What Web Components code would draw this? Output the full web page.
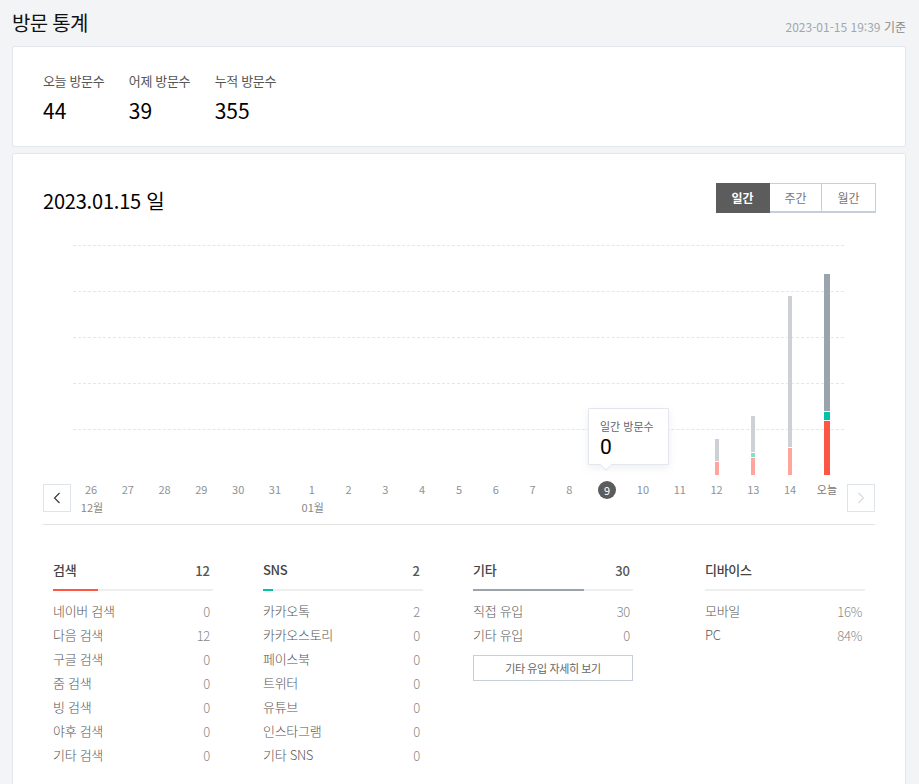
<!DOCTYPE html>
<html lang="ko">
<head>
<meta charset="utf-8">
<title>방문 통계</title>
<style>
  html, body { margin: 0; padding: 0; background: #f3f4f6; }
  body { font-family: "Noto Sans CJK KR", "Noto Sans", sans-serif; color: #000; height: 784px; overflow: hidden; }
  visit-page { width: 919px; }
</style>
</head>
<body>
<visit-page></visit-page>
<script>
class VisitHeader extends HTMLElement {
  constructor() {
    super();
    this.attachShadow({ mode: 'open' });
    this.shadowRoot.innerHTML = `
      <style>
        :host { display: flex; justify-content: space-between; align-items: flex-end; height: 46px; padding: 0 13px 0 12px; }
        h1 { margin: 0 0 11px; font-size: 20px; font-weight: 400; line-height: 24px; letter-spacing: -0.7px; color: #111; }
        span { margin-bottom: 11px; font-size: 12px; line-height: 16px; color: #a0a7ae; }
        b { font-weight: 400; color: #8a8a8a; }
      </style>
      <h1><slot name="title"></slot></h1>
      <span><slot name="time"></slot> <b>기준</b></span>
    `;
  }
}

class SummaryCard extends HTMLElement {
  constructor() {
    super();
    this.attachShadow({ mode: 'open' });
    this.shadowRoot.innerHTML = `
      <style>
        :host { display: block; box-sizing: border-box; height: 101px; margin: 0 13px 6px 12px; padding: 25px 30px 0; background: #fff; border: 1px solid #e3e6ec; border-radius: 2px; }
        #items { display: flex; gap: 24.5px; }
        .item { display: flex; flex-direction: column; }
        span { font-size: 13px; line-height: 18px; letter-spacing: -0.35px; color: #555; }
        strong { margin-top: 7px; font-size: 21px; line-height: 26px; font-weight: 400; color: #000; }
      </style>
      <div id="items"></div>
    `;
  }

  set data(items) {
    const box = this.shadowRoot.getElementById('items');
    box.innerHTML = items.map((i) => `<div class="item"><span>${i.label}</span><strong>${i.value}</strong></div>`).join('');
  }
}

class PeriodTabs extends HTMLElement {
  constructor() {
    super();
    this.attachShadow({ mode: 'open' });
    this.shadowRoot.innerHTML = `
      <style>
        :host { display: flex; height: 30px; }
        button { box-sizing: border-box; width: 52px; height: 30px; margin: 0; padding: 0; background: #fff; border: 1px solid #c5ced9; border-left: 0; border-bottom-width: 2px; font: inherit; font-size: 12px; color: #777; }
        button:last-child { width: 54px; }
        button.on { width: 54px; background: #5c5c5c; border-color: #5c5c5c; color: #fff; font-weight: 700; }
      </style>
      <button class="on">일간</button><button>주간</button><button>월간</button>
    `;
  }
}

class VisitChart extends HTMLElement {
  constructor() {
    super();
    this.attachShadow({ mode: 'open' });
    this.shadowRoot.innerHTML = `
      <style>
        :host { display: block; position: relative; }
        .plot { position: relative; height: 230px; margin: 0 31px 0 29.6px; }
        .line { position: absolute; left: 0; right: 0; border-top: 1px dashed #e4e6e8; }
        .cols, .dates { display: grid; grid-template-columns: repeat(21, 36.8px); }
        .cols { position: relative; height: 100%; align-items: end; justify-items: center; }
        .bar { display: flex; flex-direction: column; gap: 1px; width: 4px; }
        .bar.today { width: 6px; }
        .bar i { display: block; }
        .foot { display: flex; align-items: flex-start; height: 50px; padding-top: 9px; box-sizing: border-box; border-bottom: 1px solid #e3e3e3; }
        .nav { flex: none; box-sizing: border-box; width: 28px; height: 28px; background: #fff; border: 1px solid #dfe3ea; display: flex; align-items: center; justify-content: center; }
        .dates { flex: 1; padding-left: 1.6px; margin-top: -2px; }
        .date { position: relative; text-align: center; font-size: 11px; line-height: 14px; color: #8d9297; height: 14px; }
        .date small { position: absolute; left: 1px; right: -1px; top: 18px; font-size: 11px; line-height: 14px; color: #888; white-space: nowrap; }
        .date.sel span { display: inline-block; width: 18px; height: 18px; margin: -1px 0 0 2px; border-radius: 50%; background: #5c5c5c; color: #fff; line-height: 18px; }
        .date.now { color: #777; }
        .tip { position: absolute; left: 545px; top: 163px; box-sizing: border-box; width: 81px; height: 57px; padding: 9px 11px 0; background: #fff; border: 1px solid #e3e6ee; box-shadow: 0 3px 8px rgba(90, 100, 120, .1); border-radius: 1px; }
        .tip span { display: block; font-size: 11px; line-height: 16px; color: #666; white-space: nowrap; }
        .tip strong { display: block; margin-top: 1px; font-family: Roboto, sans-serif; font-size: 21px; line-height: 25px; font-weight: 400; color: #000; }
        .tip::after { content: ""; position: absolute; left: 12px; bottom: -6px; width: 9px; height: 9px; background: #fff; border-right: 1px solid #e3e6ee; border-bottom: 1px solid #e3e6ee; transform: rotate(45deg) scale(.8); }
      </style>
      <div class="plot">
        <div id="lines"></div>
        <div class="cols" id="cols"></div>
      </div>
      <div class="foot">
        <div class="nav"><svg width="8" height="12" viewBox="0 0 8 12"><path d="M6.500 1 1.500 6l5 5" fill="none" stroke="#333" stroke-width="1.100"/></svg></div>
        <div class="dates" id="dates"></div>
        <div class="nav"><svg width="8" height="12" viewBox="0 0 8 12"><path d="M1.500 1l5 5-5 5" fill="none" stroke="#d5d9e0" stroke-width="1.100"/></svg></div>
      </div>
      <div class="tip"><span>일간 방문수</span><strong>0</strong></div>
    `;
  }

  set data(days) {
    const root = this.shadowRoot;
    root.getElementById('lines').innerHTML = [0, 46, 92, 138, 184]
      .map((y) => `<div class="line" style="top:${y}px"></div>`).join('');
    root.getElementById('cols').innerHTML = days.map((d) => {
      const parts = (d.bars || []).map((b) => `<i style="height:${b[0]}px;background:${b[1]}"></i>`).join('');
      return `<div class="bar ${d.label === '오늘' ? 'today' : ''}">${parts}</div>`;
    }).join('');
    root.getElementById('dates').innerHTML = days.map((d) => {
      const cls = d.selected ? 'sel' : d.label === '오늘' ? 'now' : '';
      const month = d.month ? `<small>${d.month}</small>` : '';
      return `<div class="date ${cls}"><span>${d.label}</span>${month}</div>`;
    }).join('');
  }
}

class StatList extends HTMLElement {
  constructor() {
    super();
    this.attachShadow({ mode: 'open' });
    this.shadowRoot.innerHTML = `
      <style>
        :host { display: block; width: 160px; }
        .head { display: flex; justify-content: space-between; align-items: center; height: 24px; padding-right: 3px; font-size: 13px; font-weight: 500; letter-spacing: -0.3px; color: #444; }
        .head b { font-weight: 500; color: #555; padding-top: 2px; letter-spacing: 0; }
        .track { height: 2px; margin: 8px 0 7px; background: #eee; }
        .track i { display: block; height: 100%; }
        .row { display: flex; justify-content: space-between; align-items: center; height: 24px; padding-right: 3px; font-size: 13px; font-weight: 300; letter-spacing: -0.3px; color: #555; }
        .row b { font-weight: 300; color: #888; padding-top: 2px; }
        ::slotted(*) { margin-top: 9px; }
      </style>
      <div class="head"><span id="title"></span><b id="total"></b></div>
      <div class="track"><i id="fill"></i></div>
      <div id="rows"></div>
      <slot></slot>
    `;
  }

  set data(d) {
    const root = this.shadowRoot;
    root.getElementById('title').textContent = d.title;
    root.getElementById('total').textContent = d.total || '';
    const fill = root.getElementById('fill');
    fill.style.width = (d.fill || 0) + 'px';
    fill.style.background = d.color || 'transparent';
    root.getElementById('rows').innerHTML = d.rows
      .map((r) => `<div class="row"><span>${r[0]}</span><b>${r[1]}</b></div>`).join('');
  }
}

class OutlineButton extends HTMLElement {
  constructor() {
    super();
    this.attachShadow({ mode: 'open' });
    this.shadowRoot.innerHTML = `
      <style>
        :host { display: flex; align-items: center; justify-content: center; box-sizing: border-box; height: 26px; border: 1px solid #c5ced9; font-size: 11px; letter-spacing: -0.4px; color: #666; background: #fff; }
      </style>
      <slot></slot>
    `;
  }
}

class VisitPage extends HTMLElement {
  constructor() {
    super();
    this.attachShadow({ mode: 'open' });
    this.shadowRoot.innerHTML = `
      <style>
        :host { display: block; }
        .card { box-sizing: border-box; height: 640px; margin: 0 13px 0 12px; padding: 29px 30px 0; background: #fff; border: 1px solid #e3e6ec; border-radius: 2px; }
        .top { display: flex; justify-content: space-between; align-items: flex-start; height: 62px; }
        h2 { margin: 0; padding-top: 3px; font-size: 20px; line-height: 30px; font-weight: 400; letter-spacing: -0.2px; color: #000; }
        period-tabs { margin-right: -1px; }
        .stats { display: flex; padding: 32px 10px 0; }
        .stats stat-list + stat-list { margin-left: 50px; }
        .stats stat-list:last-child { margin-left: 72px; }
      </style>
      <visit-header><span slot="title">방문 통계</span><span slot="time">2023-01-15 19:39</span></visit-header>
      <summary-card id="summary"></summary-card>
      <div class="card">
        <div class="top"><h2>2023.01.15 일</h2><period-tabs></period-tabs></div>
        <visit-chart id="chart"></visit-chart>
        <div class="stats">
          <stat-list id="search"></stat-list>
          <stat-list id="sns"></stat-list>
          <stat-list id="etc"><outline-button>기타 유입 자세히 보기</outline-button></stat-list>
          <stat-list id="device"></stat-list>
        </div>
      </div>
    `;
  }

  connectedCallback() {
    const root = this.shadowRoot;
    root.getElementById('summary').data = [
      { label: '오늘 방문수', value: 44 },
      { label: '어제 방문수', value: 39 },
      { label: '누적 방문수', value: 355 },
    ];

    const labels = ['26', '27', '28', '29', '30', '31', '1', '2', '3', '4', '5', '6', '7', '8', '9', '10', '11', '12', '13', '14', '오늘'];
    const days = labels.map((label) => ({ label }));
    days[0].month = '12월';
    days[6].month = '01월';
    days[14].selected = true;
    days[17].bars = [[22, '#cdd1d5'], [13, '#ffa59b']];
    days[18].bars = [[36, '#cdd1d5'], [4, '#7fe0cd'], [17, '#ffa59b']];
    days[19].bars = [[151, '#cdd1d5'], [27, '#ffa59b']];
    days[20].bars = [[137, '#9ba4ad'], [8, '#00c4a7'], [54, '#ff5545']];
    root.getElementById('chart').data = days;

    root.getElementById('search').data = {
      title: '검색', total: 12, fill: 45, color: '#ff5545',
      rows: [['네이버 검색', 0], ['다음 검색', 12], ['구글 검색', 0], ['줌 검색', 0], ['빙 검색', 0], ['야후 검색', 0], ['기타 검색', 0]],
    };
    root.getElementById('sns').data = {
      title: 'SNS', total: 2, fill: 10, color: '#00c4a7',
      rows: [['카카오톡', 2], ['카카오스토리', 0], ['페이스북', 0], ['트위터', 0], ['유튜브', 0], ['인스타그램', 0], ['기타 SNS', 0]],
    };
    root.getElementById('etc').data = {
      title: '기타', total: 30, fill: 111, color: '#9ba4ad',
      rows: [['직접 유입', 30], ['기타 유입', 0]],
    };
    root.getElementById('device').data = {
      title: '디바이스',
      rows: [['모바일', '16%'], ['PC', '84%']],
    };
  }
}

customElements.define('visit-header', VisitHeader);
customElements.define('summary-card', SummaryCard);
customElements.define('period-tabs', PeriodTabs);
customElements.define('visit-chart', VisitChart);
customElements.define('stat-list', StatList);
customElements.define('outline-button', OutlineButton);
customElements.define('visit-page', VisitPage);
</script>
</body>
</html>
